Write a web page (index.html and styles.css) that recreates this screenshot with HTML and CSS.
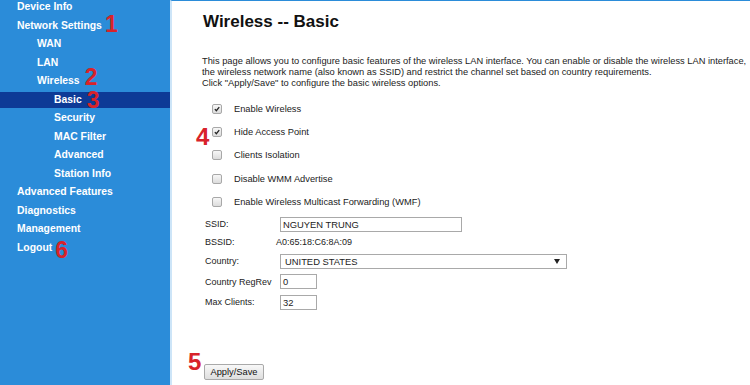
FILE: index.html
```html
<!DOCTYPE html>
<html>
<head>
<meta charset="utf-8">
<link rel="stylesheet" href="styles.css">
</head>
<body>
<nav class="sidebar">
  <ul class="menu">
    <li class="l1">Device Info</li>
    <li class="l1">Network Settings<span class="mark m1">1</span></li>
    <li class="l2">WAN</li>
    <li class="l2">LAN</li>
    <li class="l2">Wireless<span class="mark m2">2</span></li>
    <li class="l3 active">Basic<span class="mark m3">3</span></li>
    <li class="l3">Security</li>
    <li class="l3">MAC Filter</li>
    <li class="l3">Advanced</li>
    <li class="l3">Station Info</li>
    <li class="l1">Advanced Features</li>
    <li class="l1">Diagnostics</li>
    <li class="l1">Management</li>
    <li class="l1">Logout<span class="mark m6">6</span></li>
  </ul>
</nav>
<main class="content">
  <h1 class="title">Wireless -- Basic</h1>
  <p class="intro">This page allows you to configure basic features of the wireless LAN interface. You can enable or disable the wireless LAN interface,<br>the wireless network name (also known as SSID) and restrict the channel set based on country requirements.<br>Click "Apply/Save" to configure the basic wireless options.</p>
  <div class="checks">
    <div class="check-row"><span class="box"><svg viewBox="0 0 10 10" width="10" height="10"><path d="M2.3 5.2 L4.2 7.2 L7.8 2.6" fill="none" stroke="#222" stroke-width="1.6"/></svg></span><span class="lbl">Enable Wireless</span></div>
    <div class="check-row"><span class="mark m4">4</span><span class="box"><svg viewBox="0 0 10 10" width="10" height="10"><path d="M2.3 5.2 L4.2 7.2 L7.8 2.6" fill="none" stroke="#222" stroke-width="1.6"/></svg></span><span class="lbl">Hide Access Point</span></div>
    <div class="check-row"><span class="box"></span><span class="lbl">Clients Isolation</span></div>
    <div class="check-row"><span class="box"></span><span class="lbl">Disable WMM Advertise</span></div>
    <div class="check-row"><span class="box"></span><span class="lbl">Enable Wireless Multicast Forwarding (WMF)</span></div>
  </div>
  <div class="form">
    <div class="frow r1"><span class="flabel">SSID:</span><span class="field ssid">NGUYEN TRUNG</span></div>
    <div class="frow r2"><span class="flabel">BSSID:</span><span class="bssid">A0:65:18:C6:8A:09</span></div>
    <div class="frow r3"><span class="flabel">Country:</span><span class="field select">UNITED STATES<svg class="arrow" viewBox="0 0 6 5" width="6" height="5"><path d="M0 0 H6 L3 5 Z" fill="#222"/></svg></span></div>
    <div class="frow r4"><span class="flabel">Country RegRev</span><span class="field small">0</span></div>
    <div class="frow r5"><span class="flabel">Max Clients:</span><span class="field small">32</span></div>
  </div>
  <div class="actions">
    <span class="mark m5">5</span>
    <button class="btn">Apply/Save</button>
  </div>
</main>
</body>
</html>
```

FILE: styles.css
```css
html, body {
  margin: 0;
  padding: 0;
  height: 385px;
  overflow: hidden;
  background: #fff;
}
body {
  display: flex;
  font-family: "Liberation Sans", Arial, sans-serif;
  color: #222;
}
.sidebar {
  width: 170px;
  flex: none;
  background: #2b8cd9;
  height: 385px;
}
.menu {
  list-style: none;
  margin: -2px 0 0 0;
  padding: 0;
}
.menu li {
  height: 18.5px;
  line-height: 18.5px;
  font-size: 10.4px;
  font-weight: bold;
  color: #fff;
  white-space: nowrap;
}
.menu .l1 { padding-left: 17px; }
.menu .l2 { padding-left: 37px; }
.menu .l3 { padding-left: 54px; }
.menu .active {
  background: #0d3a96;
  height: 16px;
  line-height: 16px;
  margin: 1.5px 0 1px;
}
.mark {
  font-size: 23px;
  font-weight: bold;
  color: #d8232a;
  line-height: 0;
}
.m1 { margin-left: 3px; vertical-align: -3px; }
.m2 { margin-left: 5px; vertical-align: -1px; }
.m3 { margin-left: 5px; vertical-align: -5px; }
.m6 { margin-left: 3px; vertical-align: -7px; }
.content {
  flex: 1;
  border-top: 1px solid #2b8cd9;
  border-left: 2px solid #cde5f8;
  padding-left: 31px;
  overflow: hidden;
  white-space: nowrap;
}
.title {
  margin: 11px 0 0 0;
  font-size: 17px;
  line-height: 20px;
  font-weight: bold;
  color: #111;
}
.intro {
  margin: 24px 0 0 -1px;
  font-size: 9.3px;
  line-height: 11px;
  color: #222;
}
.checks {
  margin-top: 8px;
}
.check-row {
  position: relative;
  display: flex;
  align-items: center;
  height: 23.4px;
  padding-left: 9px;
  font-size: 9.3px;
}
.box {
  width: 8px;
  height: 8px;
  border: 1px solid #a8a8a8;
  border-radius: 2px;
  background: linear-gradient(#f7f7f7, #dcdcdc);
  display: flex;
  align-items: center;
  justify-content: center;
  margin-right: 12px;
}
.box svg { width: 8px; height: 8px; }
.m4 {
  position: absolute;
  left: -7px;
  top: 5px;
  line-height: 24px;
  font-size: 24px;
}
.form {
  display: flex;
  flex-direction: column;
  margin-top: 2px;
  padding-left: 2px;
  font-size: 9px;
}
.frow {
  display: flex;
  align-items: center;
}
.r1 { height: 17px; }
.r2 { height: 18px; }
.r3 { height: 21px; }
.r4 { height: 20px; }
.r5 { height: 21px; }
.flabel {
  flex: 0 0 75px;
  width: 75px;
  min-width: 0;
  color: #222;
}
.bssid { margin-left: -4px; }
.field {
  flex: none;
  display: flex;
  align-items: center;
  box-sizing: border-box;
  height: 15px;
  border: 1px solid #a9a9a9;
  padding-left: 2px;
  background: #fff;
  font-size: 9.4px;
}
.ssid { width: 182px; }
.select {
  width: 287px;
  justify-content: space-between;
  padding-left: 4px;
  padding-right: 6px;
}
.small { width: 37px; }
.actions {
  position: relative;
  margin-top: 51px;
  padding-left: 1px;
}
.m5 {
  position: absolute;
  left: -15px;
  top: -14px;
  line-height: 24px;
  font-size: 24px;
}
.btn {
  display: block;
  box-sizing: border-box;
  width: 60px;
  height: 16px;
  padding: 0;
  border: 1px solid #a9a9a9;
  border-radius: 2px;
  background: linear-gradient(#f8f8f8, #dedede);
  font-family: "Liberation Sans", Arial, sans-serif;
  font-size: 9.3px;
  color: #111;
}
```
